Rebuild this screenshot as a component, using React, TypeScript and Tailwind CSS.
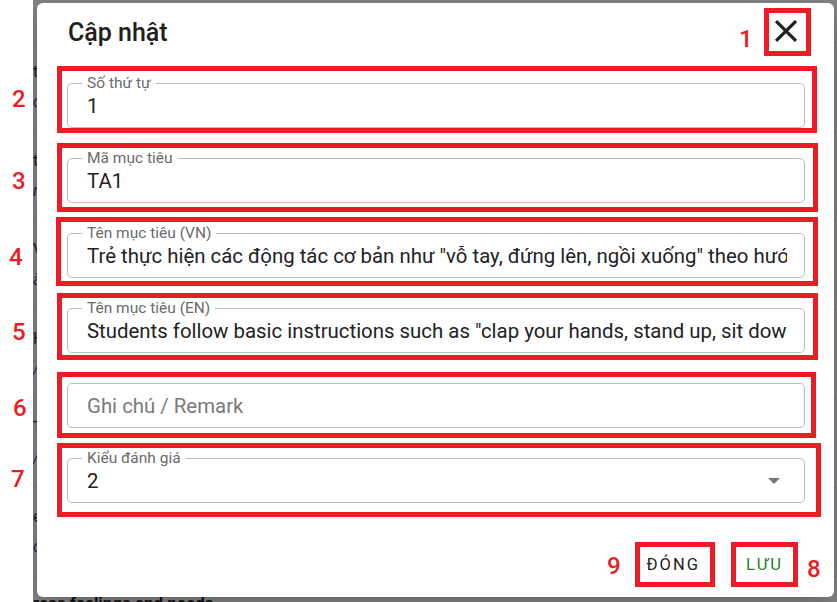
import React from "react";

const fields = [
  { label: "Số thứ tự", value: "1" },
  { label: "Mã mục tiêu", value: "TA1" },
  {
    label: "Tên mục tiêu (VN)",
    value:
      'Trẻ thực hiện các động tác cơ bản như "vỗ tay, đứng lên, ngồi xuống" theo hướng dẫn của giáo viên',
  },
  {
    label: "Tên mục tiêu (EN)",
    value:
      'Students follow basic instructions such as "clap your hands, stand up, sit down" given by the teacher',
  },
];

const boxes = [
  "left-[764px] top-[8px] w-[47px] h-[48px]",
  "left-[57px] top-[66px] w-[760px] h-[67px]",
  "left-[57px] top-[143px] w-[761px] h-[69px]",
  "left-[56px] top-[217px] w-[762px] h-[69px]",
  "left-[57px] top-[293px] w-[761px] h-[67px]",
  "left-[57px] top-[372px] w-[759px] h-[66px]",
  "left-[57px] top-[443px] w-[764px] h-[74px]",
  "left-[635px] top-[542px] w-[80px] h-[45px]",
  "left-[731px] top-[542px] w-[67px] h-[45px]",
];

const marks = [
  { n: "1", cls: "left-[739px] top-[27px]" },
  { n: "2", cls: "left-[12px] top-[87px]" },
  { n: "3", cls: "left-[12px] top-[169px]" },
  { n: "4", cls: "left-[9px] top-[245px]" },
  { n: "5", cls: "left-[12px] top-[320px]" },
  { n: "6", cls: "left-[13px] top-[396px]" },
  { n: "7", cls: "left-[11px] top-[467px]" },
  { n: "9", cls: "left-[607px] top-[554px]" },
  { n: "8", cls: "left-[807px] top-[557px]" },
];

const pageRows = [
  ["ti", "c"],
  ["t", "r"],
  ["V", "ä"],
  ["H", "/"],
  ["T", "/"],
  ["e", "c"],
];

const Outlined: React.FC<{ label?: string; children: React.ReactNode }> = ({
  label,
  children,
}) => (
  <div className="relative h-[45px] rounded-[5px] border border-[#bdbdbd] flex items-center pl-[19px] pr-[17px]">
    {label && (
      <span className="absolute -top-[10px] left-[14px] bg-white px-[5px] text-[15.5px] leading-[18px] text-[#6b6b6b]">
        {label}
      </span>
    )}
    {children}
  </div>
);

const App: React.FC = () => {
  return (
    <div className="relative w-[837px] h-[602px] overflow-hidden bg-white flex font-['Roboto',sans-serif]">
      <div className="w-[33px] shrink-0 bg-white" />

      {/* page behind the backdrop */}
      <div className="relative flex-1 bg-[#858585] overflow-hidden">
        <div className="flex flex-col">
          <div className="h-[43px] border-b border-[#7a7a7a]" />
          {pageRows.map((r, i) => (
            <div
              key={i}
              className="h-[89px] border-b border-[#7a7a7a] flex flex-col justify-center gap-[10px] text-[16px] leading-[20px] text-[#1a1a1a]"
            >
              <span>{r[0]}</span>
              <span className="italic text-[#1a2a5a]">{r[1]}</span>
            </div>
          ))}
          <div className="pt-[16px] text-[17px] font-semibold leading-[20px] text-[#111] whitespace-nowrap">
            ress feelings and needs
          </div>
        </div>

        {/* dialog */}
        <div className="absolute left-[4px] top-[3px] w-[797px] h-[594px] bg-white rounded-[6px] shadow-[0_8px_30px_rgba(0,0,0,0.25)] flex flex-col">
          <div className="flex justify-between items-start pt-[9px] pl-[31px] pr-[29px]">
            <h2 className="mt-[5px] text-[25px] leading-[32px] font-medium text-[#202020]">
              Cập nhật
            </h2>
            <button className="w-[38px] h-[38px] flex items-center justify-center text-[#202020]">
              <svg width="38" height="38" viewBox="0 0 24 24" fill="currentColor">
                <path d="M19 6.41 17.59 5 12 10.59 6.41 5 5 6.41 10.59 12 5 17.59 6.41 19 12 13.41 17.59 19 19 17.59 13.41 12z" />
              </svg>
            </button>
          </div>

          <div className="mt-[33px] pl-[30px] pr-[29px] flex flex-col gap-[30px]">
            {fields.map((f) => (
              <Outlined key={f.label} label={f.label}>
                <div className="flex-1 overflow-hidden whitespace-nowrap text-[20.4px] leading-[26px] text-[#222]">
                  {f.value}
                </div>
              </Outlined>
            ))}
            <Outlined>
              <div className="flex-1 overflow-hidden whitespace-nowrap text-[20.4px] leading-[26px] text-[#7a7a7a]">
                Ghi chú / Remark
              </div>
            </Outlined>
            <Outlined label="Kiểu đánh giá">
              <div className="flex-1 text-[20.4px] leading-[26px] text-[#222]">2</div>
              <svg width="12" height="6" viewBox="0 0 12 6" className="mr-[7px] text-[#757575]">
                <path d="M0 0h12L6 6z" fill="currentColor" />
              </svg>
            </Outlined>
          </div>

          <div className="mt-[42px] flex justify-end gap-[28px] pr-[42px]">
            <button className="h-[40px] px-[9px] text-[16.5px] font-normal tracking-[2px] text-[#222]">
              ĐÓNG
            </button>
            <button className="h-[40px] px-[9px] text-[16.5px] font-normal tracking-[2px] text-[#2e7d32]">
              LƯU
            </button>
          </div>
        </div>
      </div>

      {/* annotations */}
      {boxes.map((b, i) => (
        <div key={i} className={`absolute border-[5px] border-[#ed1c24] ${b}`} />
      ))}
      {marks.map((m) => (
        <span
          key={m.n}
          className={`absolute text-[24px] leading-none font-medium text-[#ed1c24] ${m.cls}`}
        >
          {m.n}
        </span>
      ))}
    </div>
  );
};

export default App;
